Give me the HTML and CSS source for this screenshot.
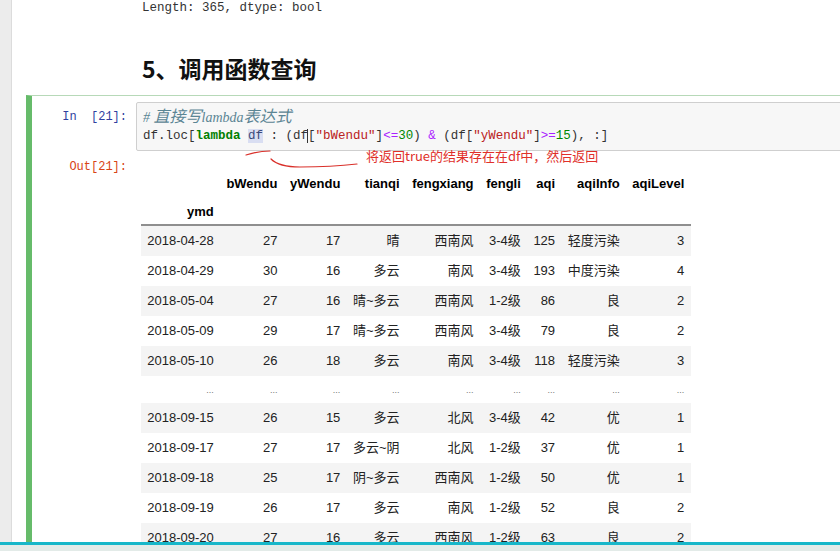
FILE: index.html
```html
<!DOCTYPE html>
<html lang="zh">
<head>
<meta charset="utf-8">
<title>Notebook</title>
<link rel="stylesheet" href="styles.css">
</head>
<body>
<div class="page">
  <div class="prev-output">Length: 365, dtype: bool</div>
  <h2 class="heading">5、调用函数查询</h2>

  <div class="cell">
    <div class="row">
      <div class="prompt in">In  [21]:</div>
      <div class="input-area">
        <div class="code-line comment"># <span class="cjk">直接写</span>lambda<span class="cjk">表达式</span></div>
        <div class="code-line">df.loc[<span class="kw">lambda</span> <span class="hl">df</span> : (df<span class="bracket">[</span><span class="str">"bWendu"</span>]<span class="op">&lt;=</span><span class="num">30</span>) <span class="op">&amp;</span> (df[<span class="str">"yWendu"</span>]<span class="op">&gt;=</span><span class="num">15</span>), :]</div>
      </div>
    </div>

    <div class="row out-row">
      <div class="prompt out">Out[21]:</div>
      <div class="output-area">
        <table class="df">
          <thead>
            <tr><th></th><th>bWendu</th><th>yWendu</th><th>tianqi</th><th>fengxiang</th><th>fengli</th><th>aqi</th><th>aqiInfo</th><th>aqiLevel</th></tr>
            <tr class="index-name"><th>ymd</th><th></th><th></th><th></th><th></th><th></th><th></th><th></th><th></th></tr>
          </thead>
          <tbody>
            <tr><td class="idx">2018-04-28</td><td>27</td><td>17</td><td>晴</td><td>西南风</td><td>3-4级</td><td>125</td><td>轻度污染</td><td>3</td></tr>
            <tr><td class="idx">2018-04-29</td><td>30</td><td>16</td><td>多云</td><td>南风</td><td>3-4级</td><td>193</td><td>中度污染</td><td>4</td></tr>
            <tr><td class="idx">2018-05-04</td><td>27</td><td>16</td><td>晴~多云</td><td>西南风</td><td>1-2级</td><td>86</td><td>良</td><td>2</td></tr>
            <tr><td class="idx">2018-05-09</td><td>29</td><td>17</td><td>晴~多云</td><td>西南风</td><td>3-4级</td><td>79</td><td>良</td><td>2</td></tr>
            <tr><td class="idx">2018-05-10</td><td>26</td><td>18</td><td>多云</td><td>南风</td><td>3-4级</td><td>118</td><td>轻度污染</td><td>3</td></tr>
            <tr class="ellipsis"><td>...</td><td>...</td><td>...</td><td>...</td><td>...</td><td>...</td><td>...</td><td>...</td><td>...</td></tr>
            <tr><td class="idx">2018-09-15</td><td>26</td><td>15</td><td>多云</td><td>北风</td><td>3-4级</td><td>42</td><td>优</td><td>1</td></tr>
            <tr><td class="idx">2018-09-17</td><td>27</td><td>17</td><td>多云~阴</td><td>北风</td><td>1-2级</td><td>37</td><td>优</td><td>1</td></tr>
            <tr><td class="idx">2018-09-18</td><td>25</td><td>17</td><td>阴~多云</td><td>西南风</td><td>1-2级</td><td>50</td><td>优</td><td>1</td></tr>
            <tr><td class="idx">2018-09-19</td><td>26</td><td>17</td><td>多云</td><td>南风</td><td>1-2级</td><td>52</td><td>良</td><td>2</td></tr>
            <tr><td class="idx">2018-09-20</td><td>27</td><td>16</td><td>多云</td><td>西南风</td><td>1-2级</td><td>63</td><td>良</td><td>2</td></tr>
          </tbody>
        </table>
      </div>
    </div>
  </div>
</div>

<div class="note-text">将返回true的结果存在在df中，然后返回</div>
<svg class="note-strokes" width="130" height="30" viewBox="0 0 130 30">
  <path d="M6 8 C 12 6, 20 4, 30 4" fill="none" stroke="#d9302a" stroke-width="1.2" stroke-linecap="round"/>
  <path d="M31 12 C 36 17, 44 20, 60 20 C 80 20, 100 19, 117 17" fill="none" stroke="#d9302a" stroke-width="1.2" stroke-linecap="round"/>
</svg>

<div class="status-bar"></div>
</body>
</html>
```

FILE: styles.css
```css
html, body {
  margin: 0;
  padding: 0;
  height: 100%;
}

body {
  background: #ececec;
  overflow: hidden;
  font-family: "Liberation Sans", Arial, "Noto Sans CJK SC", sans-serif;
  color: #000;
}

.page {
  margin-left: 11px;
  border-left: 1px solid #dcdcdc;
  background: #fff;
  width: 1000px;
  min-height: 100%;
  box-sizing: border-box;
}

.prev-output {
  padding-left: 130px;
  font-family: "Liberation Mono", "Noto Sans CJK SC", monospace;
  font-size: 12.5px;
  line-height: 17px;
  color: #333;
  white-space: pre;
}

.heading {
  margin: 36px 0 0 0;
  padding-left: 130px;
  font-family: "Noto Sans CJK SC", sans-serif;
  font-weight: 700;
  font-size: 23px;
  line-height: 30px;
  color: #111;
}

.cell {
  margin-top: 12px;
  margin-left: 14px;
  border-left: 6px solid #66bb6a;
  border-top: 1px solid #b7d9b8;
  padding: 6px 0 20px 5px;
}

.row {
  display: flex;
  align-items: flex-start;
}

.prompt {
  width: 99px;
  flex: none;
  box-sizing: border-box;
  padding-right: 9px;
  text-align: right;
  font-family: "Liberation Mono", monospace;
  font-size: 12.5px;
  line-height: 18px;
  white-space: pre;
}

.prompt.in {
  color: #303f9f;
  padding-top: 6px;
  font-size: 12px;
}

.prompt.out {
  color: #d84315;
  padding-top: 1px;
  font-size: 12px;
}

.input-area {
  flex: 1;
  border: 1px solid #cfcfcf;
  border-radius: 2px;
  background: #f7f7f7;
  padding: 5px 6px;
}

.code-line {
  font-family: "Liberation Mono", "Noto Sans CJK SC", monospace;
  font-size: 12.5px;
  line-height: 18px;
  color: #333;
  white-space: pre;
}

.comment {
  font-family: "Liberation Serif", "Noto Sans CJK SC", serif;
  font-style: italic;
  font-size: 14px;
  color: #5b8594;
}

.comment .cjk {
  font-size: 16px;
}

.kw { color: #008000; font-weight: 700; }
.hl { background: #d9def2; color: #3a4a7a; }
.str { color: #ba2121; }
.op { color: #aa22ff; }
.num { color: #008800; }
.bracket { border-left: 1px solid #333; margin-left: -1px; }

.out-row {
  margin-top: 6px;
}

.output-area {
  flex: 1;
}

.df {
  margin: 13px 0 0 5px;
  border-collapse: collapse;
  border-spacing: 0;
  font-family: "Liberation Sans", Arial, "Noto Sans CJK SC", sans-serif;
  font-size: 13px;
  color: #222;
}

.df th, .df td {
  text-align: right;
  white-space: nowrap;
  padding: 7px 6.3px;
  line-height: 16px;
}

.df thead th {
  font-weight: 700;
  color: #000;
  padding: 6px 6.3px;
}

.df thead tr.index-name th {
  padding-bottom: 4px;
  border-bottom: 2px solid #8f8f8f;
}

.df tbody tr:nth-child(odd) {
  background: #f4f4f4;
}

.df td.idx {
  text-align: left;
}

.df tr.ellipsis td {
  font-size: 9px;
  color: #777;
  padding: 6px 6.3px 5px;
}

.note-text {
  position: absolute;
  left: 366px;
  top: 147px;
  font-family: "Noto Sans CJK SC", sans-serif;
  font-size: 13px;
  line-height: 18px;
  color: #e0302a;
  white-space: nowrap;
}

.note-strokes {
  position: absolute;
  left: 240px;
  top: 147px;
}

.status-bar {
  position: fixed;
  left: 0;
  right: 0;
  bottom: 0;
  height: 6px;
  border-top: 3px solid #17b7c9;
  background: #e3ebe8;
}
```
